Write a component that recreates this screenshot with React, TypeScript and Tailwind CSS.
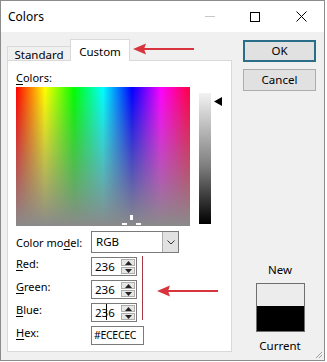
import React from "react";

const font = "font-['Noto_Sans',sans-serif]";

function Spin({ value, cursor }: { value: string; cursor?: boolean }) {
  return (
    <div className="w-[46px] h-[19px] border border-[#7a7a7a] bg-white flex items-center">
      <div className="flex-1 pl-[3px] text-[11.5px] leading-none text-black relative">
        {value}
        {cursor && <span className="absolute left-[14px] top-[-3px] w-px h-[16px] bg-black" />}
      </div>
      <div className="w-[15px] h-full flex flex-col gap-px py-px pr-px">
        <div className="flex-1 bg-[#e6e6e6] border border-[#adadad] flex items-center justify-center">
          <svg width="7" height="4" viewBox="0 0 7 4"><path d="M0 4L3.5 0L7 4Z" fill="#222" /></svg>
        </div>
        <div className="flex-1 bg-[#e6e6e6] border border-[#adadad] flex items-center justify-center">
          <svg width="7" height="4" viewBox="0 0 7 4"><path d="M0 0L3.5 4L7 0Z" fill="#222" /></svg>
        </div>
      </div>
    </div>
  );
}

function Row({ label, children }: { label: React.ReactNode; children: React.ReactNode }) {
  return (
    <div className="flex items-start h-[23px]">
      <div className="w-[83px] pl-[8px] text-[11px] leading-[14px] text-black">{label}</div>
      {children}
    </div>
  );
}

const U = ({ c }: { c: string }) => <span className="underline underline-offset-2">{c}</span>;

export default function App() {
  return (
    <div className={`w-[327px] h-[362px] bg-white relative overflow-hidden ${font}`}>
      <div className="w-[325px] h-[361px] border border-[#8c8c8c] bg-[#f0f0f0] flex flex-col relative">
        {/* title bar */}
        <div className="h-[31px] bg-white flex items-center shrink-0">
          <span className="pl-[7px] text-[12px] text-black flex-1">Colors</span>
          <div className="w-[10px] h-px bg-[#c8c8c8] mr-[35px]" />
          <div className="w-[10px] h-[10px] border border-black mr-[36px]" />
          <svg width="11" height="11" viewBox="0 0 11 11" className="mr-[17px]">
            <path d="M0.5 0.5L10.5 10.5M10.5 0.5L0.5 10.5" stroke="#000" strokeWidth="1" />
          </svg>
        </div>

        <div className="flex flex-1">
          {/* left: tabs + panel */}
          <div className="pl-[6px] w-[231px] flex flex-col">
            <div className="flex items-end h-[28px] pt-[7px]">
              <div className="w-[63px] h-[14px] border-t border-l border-[#d9d9d9] flex items-center justify-center text-[11.5px] leading-none text-black pt-[2px]">
                Standard
              </div>
              <div className="w-[60px] h-[22px] bg-white border-t border-l border-r border-[#d9d9d9] flex items-center justify-center text-[11.5px] leading-none text-black -mb-px relative z-10 pt-[2px]">
                Custom
              </div>
            </div>
            <div className="h-[292px] bg-white border border-[#d9d9d9] flex flex-col">
              <div className="pl-[8px] pt-[10px] text-[11px] leading-[14px] text-black">
                <U c="C" />olors:
              </div>
              <div className="flex pl-[8px] mt-[2px]">
                <div className="w-[174px] h-[139px] relative bg-[linear-gradient(to_bottom,rgba(138,138,138,0),#8a8a8a),linear-gradient(to_right,#ff0000,#ffff00,#00ff00,#00ffff,#0000ff,#ff00ff,#ff0040)]">
                  <div className="absolute left-[114px] top-[128px] w-[3px] h-[5px] bg-white" />
                  <div className="absolute left-[106px] top-[136px] w-[5px] h-[2px] bg-white" />
                  <div className="absolute left-[120px] top-[136px] w-[5px] h-[2px] bg-white" />
                </div>
                <div className="ml-[9px] mt-[6px] w-[12px] h-[131px] bg-[linear-gradient(to_bottom,#f2f2f2,#808080_55%,#000)]" />
                <svg width="8" height="9" viewBox="0 0 8 9" className="ml-[3px] mt-[10px]">
                  <path d="M0 4.5L8 0V9Z" fill="#000" />
                </svg>
              </div>
              <div className="flex items-center mt-[5px] h-[22px]">
                <div className="w-[83px] pl-[8px] text-[11px] leading-none text-black">
                  Color mo<U c="d" />el:
                </div>
                <div className="w-[88px] h-[22px] border border-[#7a7a7a] bg-white flex items-center">
                  <span className="flex-1 pl-[4px] text-[11.5px] leading-none text-black">RGB</span>
                  <div className="w-[16px] h-full bg-[#e1e1e1] border-l border-[#adadad] flex items-center justify-center">
                    <svg width="8" height="5" viewBox="0 0 8 5"><path d="M0.5 0.5L4 4L7.5 0.5" stroke="#333" fill="none" /></svg>
                  </div>
                </div>
              </div>
              <div className="mt-[4px] flex flex-col">
                <Row label={<><U c="R" />ed:</>}>
                  <Spin value="236" />
                </Row>
                <Row label={<><U c="G" />reen:</>}>
                  <Spin value="236" />
                </Row>
                <Row label={<><U c="B" />lue:</>}>
                  <Spin value="236" cursor />
                </Row>
                <Row label={<><U c="H" />ex:</>}>
                  <div className="w-[53px] h-[19px] border border-[#7a7a7a] bg-white flex items-center pl-[2px] text-[10.5px] tracking-[-0.3px] leading-none text-black">
                    #ECECEC
                  </div>
                </Row>
              </div>
            </div>
          </div>

          {/* right: buttons + swatch */}
          <div className="flex flex-col ml-[11px] pt-[8px] w-[74px]">
            <button className="w-[73px] h-[22px] bg-[#e1e1e1] border-2 border-[#2b6e8a] text-[11.5px] leading-none text-black">
              OK
            </button>
            <button className="mt-[7px] w-[73px] h-[22px] bg-[#e1e1e1] border border-[#adadad] text-[11.5px] leading-none text-black">
              Cancel
            </button>
            <div className="flex-1" />
            <div className="flex flex-col items-center pb-[7px]">
              <span className="text-[11.5px] leading-[14px] text-black">New</span>
              <div className="mt-[6px] w-[49px] h-[49px] border border-[#6f6f6f] flex flex-col">
                <div className="h-[22px] bg-[#ececec]" />
                <div className="flex-1 bg-black" />
              </div>
              <span className="mt-[7px] text-[11.5px] leading-[14px] text-black">Current</span>
            </div>
          </div>
        </div>
        <svg width="10" height="10" viewBox="0 0 10 10" className="absolute right-[1px] bottom-[1px]">
          <path d="M9 3L3 9M9 6L6 9" stroke="#a0a0a0" />
        </svg>
      </div>

      {/* annotations */}
      <svg width="62" height="12" viewBox="0 0 62 12" className="absolute left-[133px] top-[43px]">
        <path d="M10 6H61" stroke="#d8343d" strokeWidth="2" />
        <path d="M0 6L13 0.5L11 6L13 11.5Z" fill="#d8343d" />
      </svg>
      <div className="absolute left-[142px] top-[256px] w-px h-[64px] bg-[#a33a3f]" />
      <svg width="62" height="12" viewBox="0 0 62 12" className="absolute left-[157px] top-[285px]">
        <path d="M10 6H61" stroke="#d8343d" strokeWidth="2" />
        <path d="M0 6L13 0.5L11 6L13 11.5Z" fill="#d8343d" />
      </svg>
    </div>
  );
}
